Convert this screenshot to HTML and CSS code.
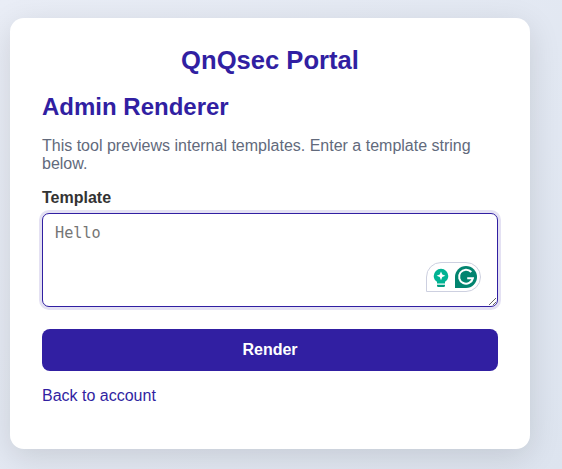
FILE: index.html
```html
<!DOCTYPE html>
<html lang="en">
<head>
<meta charset="utf-8">
<title>QnQsec Portal</title>
<link rel="stylesheet" href="styles.css">
</head>
<body>
<main class="card">
  <h1>QnQsec Portal</h1>
  <h2>Admin Renderer</h2>
  <p class="intro">This tool previews internal templates. Enter a template string below.</p>
  <form>
    <label for="template">Template</label>
    <div class="field">
      <textarea id="template" placeholder="Hello"></textarea>
      <div class="assistant">
        <svg class="bulb" width="16" height="20" viewBox="0 0 16 20"><path fill="#00b393" d="M8 .8A7.3 7.3 0 0 0 .7 8.1c0 2.7 1.4 4.4 3.3 5.7v1.6h8v-1.6c1.9-1.3 3.3-3 3.3-5.7A7.3 7.3 0 0 0 8 .8Z"/><path fill="#fff" d="M8 3.4 9.3 6.5 12.4 7.8 9.3 9.1 8 12.2 6.7 9.1 3.6 7.8 6.7 6.5Z"/><path fill="#009c80" d="M4 16.8h8v.6c0 1-.7 1.7-1.7 1.7H5.7c-1 0-1.7-.7-1.7-1.7Z"/></svg>
        <svg class="gram" width="22" height="22" viewBox="0 0 22 22"><path fill="#02846f" d="M11 0a11 11 0 0 1 0 22H0V11A11 11 0 0 1 11 0Z"/><path fill="none" stroke="#fff" stroke-width="2" d="M16.3 6A7 7 0 1 0 17.9 12.2H12.2M14.6 12.2H18.2"/></svg>
      </div>
    </div>
    <button type="button">Render</button>
  </form>
  <a href="#">Back to account</a>
</main>
</body>
</html>
```
FILE: styles.css
```css
* { box-sizing: border-box; }
body {
  margin: 0;
  padding: 18px 32px 20px 10px;
  height: 469px;
  overflow: hidden;
  background: linear-gradient(135deg, #e9edf6, #dde4ef);
  font-family: "Liberation Sans", Arial, sans-serif;
  font-size: 16px;
  color: #333;
}
.card {
  width: 520px;
  height: 431px;
  padding: 28px 32px;
  background: #fff;
  border-radius: 14px;
  box-shadow: 0 8px 32px rgba(0, 0, 0, .12);
}
h1, h2 { margin: 0; color: #311fa2; font-weight: 700; }
h1 { font-size: 25.6px; line-height: 29px; text-align: center; }
h2 { margin-top: 18px; font-size: 24px; line-height: 27px; }
.intro { margin: 17px 0 16px; line-height: 18px; color: #626a7c; }
label { display: block; margin-bottom: 6px; line-height: 18px; font-weight: 700; }
.field { position: relative; height: 94px; }
textarea {
  display: block;
  width: 100%;
  height: 94px;
  padding: 10px 12px;
  border: 1px solid #311fa2;
  border-radius: 7px;
  outline: none;
  box-shadow: 0 0 0 3px #e4e1f3;
  font: 15.2px "DejaVu Sans Mono", monospace;
  resize: vertical;
}
.assistant {
  position: absolute;
  right: 17px;
  bottom: 15px;
  display: flex;
  align-items: center;
  gap: 6px;
  width: 55px;
  height: 30px;
  padding-left: 6px;
  border: 1px solid #cdd0e0;
  border-radius: 15px 15px 15px 0;
  background: #fff;
}
.bulb { position: relative; top: 1px; }
button {
  display: block;
  width: 100%;
  height: 42px;
  margin: 22px 0 16px;
  border: 0;
  border-radius: 8px;
  background: #311fa2;
  color: #fff;
  font: 700 16px "Liberation Sans", Arial, sans-serif;
}
a { color: #311fa2; line-height: 18px; text-decoration: none; }
```
